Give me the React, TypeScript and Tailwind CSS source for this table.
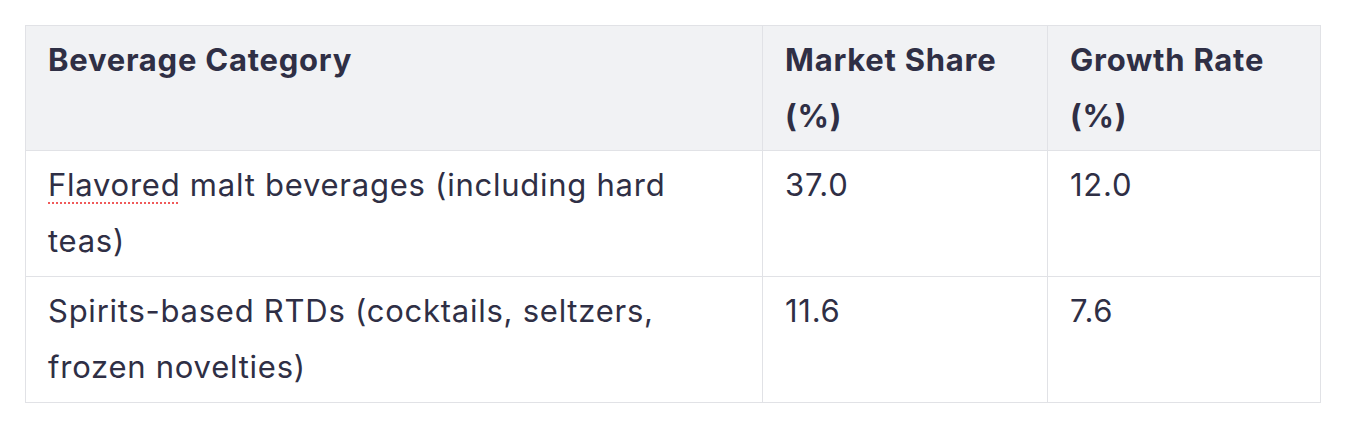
const rows = [
  { category: 'Flavored malt beverages (including hard teas)', share: '37.0', growth: '12.0', flagged: true },
  { category: 'Spirits-based RTDs (cocktails, seltzers, frozen novelties)', share: '11.6', growth: '7.6', flagged: false },
];

export default function App() {
  return (
    <div className="bg-white px-[25px] pt-[25px] font-['Inter','Liberation_Sans',sans-serif] text-[#2f2f45]">
      <table className="w-[1295px] table-fixed border-collapse text-[31px] leading-[56px] tracking-[0.75px]">
        <colgroup>
          <col className="w-[737px]" />
          <col className="w-[285px]" />
          <col className="w-[273px]" />
        </colgroup>
        <thead>
          <tr className="bg-[#f1f2f4]">
            <th className="border border-[#e1e2e6] px-[22px] pt-[6px] pb-[6px] text-left align-top font-bold">Beverage Category</th>
            <th className="border border-[#e1e2e6] px-[22px] pt-[6px] pb-[6px] text-left align-top font-bold">Market Share (%)</th>
            <th className="border border-[#e1e2e6] px-[22px] pt-[6px] pb-[6px] text-left align-top font-bold">Growth Rate (%)</th>
          </tr>
        </thead>
        <tbody>
          {rows.map((r) => (
            <tr key={r.share}>
              <td className="border border-[#e1e2e6] px-[22px] pt-[6px] pb-[7px] align-top">
                {r.flagged ? (
                  <>
                    <span className="underline decoration-dotted decoration-[#f05a5a] decoration-2 underline-offset-[6px]">Flavored</span>
                    {r.category.slice('Flavored'.length)}
                  </>
                ) : (
                  r.category
                )}
              </td>
              <td className="border border-[#e1e2e6] px-[22px] pt-[6px] pb-[7px] align-top">{r.share}</td>
              <td className="border border-[#e1e2e6] px-[22px] pt-[6px] pb-[7px] align-top">{r.growth}</td>
            </tr>
          ))}
        </tbody>
      </table>
    </div>
  );
}
